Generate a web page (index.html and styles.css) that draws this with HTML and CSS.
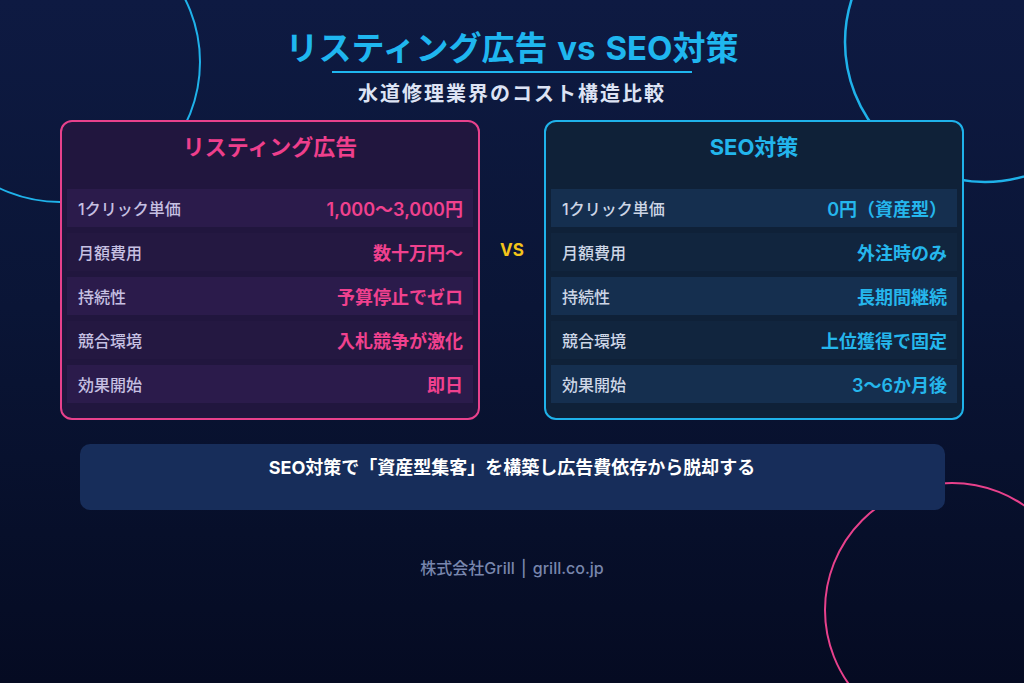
FILE: index.html
```html
<!DOCTYPE html>
<html lang="ja">
<head>
<meta charset="utf-8">
<title>リスティング広告 vs SEO対策</title>
<link rel="stylesheet" href="styles.css">
</head>
<body>
<div class="page">
  <svg class="deco" width="1024" height="683" viewBox="0 0 1024 683" aria-hidden="true">
    <circle cx="60" cy="62" r="140" fill="none" stroke="#1fb2ea" stroke-width="2"/>
    <circle cx="985" cy="42" r="140" fill="none" stroke="#1fb2ea" stroke-width="2.5"/>
    <circle cx="952" cy="610" r="127" fill="none" stroke="#e8418c" stroke-width="2"/>
  </svg>

  <header class="head">
    <h1 class="title">リスティング広告 vs SEO対策</h1>
    <div class="rule"></div>
    <p class="subtitle">水道修理業界のコスト構造比較</p>
  </header>

  <section class="compare">
    <div class="card card-ad">
      <h2 class="card-title">リスティング広告</h2>
      <ul class="rows">
        <li class="row"><span class="label">1クリック単価</span><span class="value">1,000〜3,000円</span></li>
        <li class="row"><span class="label">月額費用</span><span class="value">数十万円〜</span></li>
        <li class="row"><span class="label">持続性</span><span class="value">予算停止でゼロ</span></li>
        <li class="row"><span class="label">競合環境</span><span class="value">入札競争が激化</span></li>
        <li class="row"><span class="label">効果開始</span><span class="value">即日</span></li>
      </ul>
    </div>

    <div class="vs">VS</div>

    <div class="card card-seo">
      <h2 class="card-title">SEO対策</h2>
      <ul class="rows">
        <li class="row"><span class="label">1クリック単価</span><span class="value">0円（資産型）</span></li>
        <li class="row"><span class="label">月額費用</span><span class="value">外注時のみ</span></li>
        <li class="row"><span class="label">持続性</span><span class="value">長期間継続</span></li>
        <li class="row"><span class="label">競合環境</span><span class="value">上位獲得で固定</span></li>
        <li class="row"><span class="label">効果開始</span><span class="value">3〜6か月後</span></li>
      </ul>
    </div>
  </section>

  <div class="callout">SEO対策で「資産型集客」を構築し広告費依存から脱却する</div>

  <footer class="foot">株式会社Grill | grill.co.jp</footer>
</div>
</body>
</html>
```

FILE: styles.css
```css
* { box-sizing: border-box; }

html, body {
  margin: 0;
  padding: 0;
}

body {
  width: 1024px;
  height: 683px;
  overflow: hidden;
  font-family: "Inter", "Noto Sans CJK JP", "Noto Sans", sans-serif;
  background: linear-gradient(180deg, #0e1a42 0%, #0a1536 45%, #050b22 100%);
}

.page {
  position: relative;
  width: 1024px;
  height: 683px;
  display: flex;
  flex-direction: column;
  align-items: center;
}

.deco {
  position: absolute;
  left: 0;
  top: 0;
  z-index: 0;
}

.head, .compare, .callout, .foot {
  position: relative;
  z-index: 1;
}

.head {
  display: flex;
  flex-direction: column;
  align-items: center;
  padding-top: 27px;
}

.title {
  margin: 0;
  font-size: 33px;
  line-height: 42px;
  font-weight: 700;
  color: #1fb6ef;
  word-spacing: 2px;
}

.rule {
  width: 360px;
  height: 2px;
  background: #1fb6ef;
  margin-top: 2px;
}

.subtitle {
  margin: 7px 0 0;
  font-size: 20px;
  line-height: 28px;
  font-weight: 700;
  color: #dde3f4;
  letter-spacing: 2px;
}

.compare {
  margin-top: 12px;
  display: flex;
  align-items: stretch;
  width: 904px;
}

.card {
  width: 420px;
  height: 300px;
  border: 2px solid;
  border-radius: 12px;
  padding: 12px 5px 14px;
  display: flex;
  flex-direction: column;
}

.card-ad {
  border-color: #e8418c;
  background: #21163e;
}

.card-seo {
  border-color: #1fb2ea;
  background: #0f2138;
}

.card-title {
  margin: 0 0 29px;
  text-align: center;
  font-size: 22px;
  line-height: 26px;
  font-weight: 700;
}

.card-ad .card-title { color: #ee3f8c; }
.card-seo .card-title { color: #22b5ec; }

.rows {
  list-style: none;
  margin: 0;
  padding: 0;
  display: flex;
  flex-direction: column;
  gap: 6px;
}

.row {
  height: 38px;
  display: flex;
  align-items: center;
  justify-content: space-between;
  padding: 0 10px 0 11px;
}

.card-ad .row:nth-child(odd) { background: #2b1b4b; }
.card-ad .row:nth-child(even) { background: #241841; }
.card-seo .row:nth-child(odd) { background: #152f4f; }
.card-seo .row:nth-child(even) { background: #11253e; }

.label {
  font-size: 16px;
  font-weight: 500;
}

.card-ad .label { color: #c6c0e2; }
.card-seo .label { color: #cdd6e6; }

.value {
  font-size: 18px;
  font-weight: 600;
}

.card-ad .value { color: #f0418e; }
.card-seo .value { color: #25b6ec; }

.vs {
  flex: 1;
  display: flex;
  align-items: center;
  justify-content: center;
  font-size: 17px;
  font-weight: 700;
  color: #f4c41a;
  padding-bottom: 40px;
}

.callout {
  margin-top: 24px;
  width: 865px;
  height: 66px;
  border-radius: 10px;
  background: #172d5a;
  text-align: center;
  padding-top: 13px;
  font-size: 18px;
  line-height: 22px;
  font-weight: 700;
  color: #ffffff;
}

.foot {
  margin-top: 48px;
  font-size: 16px;
  line-height: 20px;
  font-weight: 500;
  color: #7886ad;
  word-spacing: 2px;
}
```
